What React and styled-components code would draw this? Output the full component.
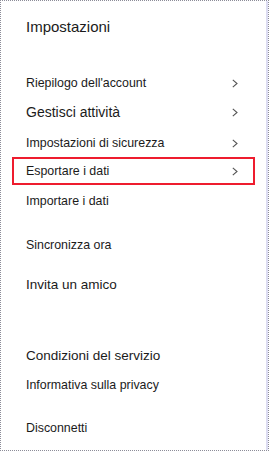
import React from 'react';
import styled, { createGlobalStyle } from 'styled-components';

const Global = createGlobalStyle`
  html, body { margin: 0; padding: 0; background: #fff; }
  body { font-family: "Liberation Sans", Arial, sans-serif; color: #1b1b1b; }
`;

const Panel = styled.div`
  box-sizing: border-box;
  width: 269px;
  height: 451px;
  border: 1px dotted #8c8c98;
  background: #fff;
  display: flex;
`;

const Inner = styled.div`
  flex: 1;
  border-right: 2px solid #dcdcf2;
  padding: 16px 11px 0 11px;
  display: flex;
  flex-direction: column;
`;

const Title = styled.h1`
  margin: 0 0 0 14px;
  font-size: 15px;
  line-height: 20px;
  font-weight: 400;
`;

const Row = styled.div`
  box-sizing: border-box;
  height: 28px;
  margin-top: ${p => p.$gap}px;
  border: 2px solid ${p => (p.$active ? '#ee1c2e' : 'transparent')};
  padding: 0 15px 0 12px;
  display: flex;
  align-items: center;
  justify-content: space-between;
  font-size: ${p => p.$size || 12.4}px;
`;

const Chevron = () => (
  <svg width="6" height="9" viewBox="0 0 6 9">
    <path d="M0.8 0.8 L5 4.5 L0.8 8.2" fill="none" stroke="#555" strokeWidth="1.1" />
  </svg>
);

const items = [
  { label: "Riepilogo dell'account", gap: 32, arrow: true },
  { label: 'Gestisci attività', gap: 1, arrow: true, size: 14 },
  { label: 'Impostazioni di sicurezza', gap: 3, arrow: true },
  { label: 'Esportare i dati', gap: 0, arrow: true, active: true },
  { label: 'Importare i dati', gap: 2 },
  { label: 'Sincronizza ora', gap: 16 },
  { label: 'Invita un amico', gap: 11, size: 13.5 },
  { label: 'Condizioni del servizio', gap: 43, size: 13.5 },
  { label: 'Informativa sulla privacy', gap: 2 },
  { label: 'Disconnetti', gap: 15 },
];

export default function App() {
  return (
    <>
      <Global />
      <Panel>
        <Inner>
          <Title>Impostazioni</Title>
          {items.map(it => (
            <Row key={it.label} $gap={it.gap} $active={it.active} $size={it.size}>
              <span>{it.label}</span>
              {it.arrow && <Chevron />}
            </Row>
          ))}
        </Inner>
      </Panel>
    </>
  );
}
